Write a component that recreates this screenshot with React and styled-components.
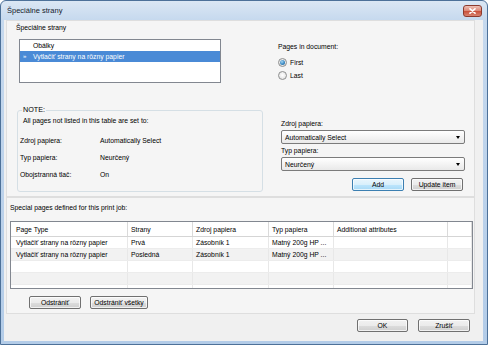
import React from 'react';
import styled, { createGlobalStyle } from 'styled-components';

const GlobalStyle = createGlobalStyle`
  html, body {
    margin: 0;
    padding: 0;
  }
  body {
    font-family: 'Liberation Sans', Arial, sans-serif;
    font-size: 6.8px;
    color: #000;
    background: #ffffff;
  }
  * {
    box-sizing: border-box;
  }
`;

const Window = styled.div`
  width: 488px;
  height: 345px;
  display: flex;
  flex-direction: column;
  padding: 0 4px 3px 3px;
  border: 1px solid #4d7199;
  border-radius: 6px 6px 0 0;
  background: linear-gradient(180deg, #dbe7f4 0px, #c6d9ee 19px, #b3cce8 100%);
`;

const TitleBar = styled.div`
  height: 19px;
  flex: none;
  display: flex;
  align-items: center;
  justify-content: space-between;
  padding-left: 3px;
`;

const Title = styled.span`
  font-size: 7.5px;
  color: #15202c;
`;

const CloseButton = styled.div`
  width: 19px;
  height: 12px;
  margin-right: 1px;
  border-radius: 3px;
  border: 1px solid #8c3a2d;
  background: linear-gradient(180deg, #eec0b5 0%, #dc8877 48%, #c9503a 52%, #d8826f 100%);
  display: flex;
  align-items: center;
  justify-content: center;
`;

const Client = styled.div`
  flex: 1;
  display: flex;
  flex-direction: column;
  background: #f0f0f0;
  padding: 0 8px 0 2px;
`;

const Panel = styled.div`
  flex: none;
  height: ${({ $h }) => $h}px;
  background: #f5f5f5;
  border: 1px solid #dedede;
  display: flex;
  flex-direction: column;
`;

const SectionTitle = styled.div`
  line-height: 10px;
  height: 10px;
  margin: 2px 0 0 9px;
  white-space: nowrap;
`;

const TopRow = styled.div`
  display: flex;
  align-items: flex-start;
  margin-top: 6px;
  padding-left: 12px;
  gap: 57px;
`;

const ListBox = styled.div`
  width: 202px;
  height: 44px;
  background: #fff;
  border: 1px solid #828790;
`;

const ListItem = styled.div`
  height: 11px;
  line-height: 11px;
  display: flex;
  align-items: center;
  padding-left: 3px;
  background: ${({ $selected }) => ($selected ? '#4a8ad6' : 'transparent')};
  color: ${({ $selected }) => ($selected ? '#fff' : '#000')};
`;

const ItemMarker = styled.span`
  width: 10px;
  font-size: 6px;
`;

const PagesGroup = styled.div`
  padding-top: 3px;
`;

const FieldLabel = styled.div`
  line-height: 10px;
  height: 10px;
  white-space: nowrap;
`;

const RadioRow = styled.label`
  display: flex;
  align-items: center;
  gap: 3px;
  height: 13px;
  &:first-of-type {
    margin-top: 4px;
  }
`;

const RadioDot = styled.span`
  width: 9px;
  height: 9px;
  border-radius: 50%;
  border: 1px solid #8e8f8f;
  background: radial-gradient(circle at 50% 45%, #ffffff 0%, #e6e6e6 70%, #d2d2d2 100%);
  display: flex;
  align-items: center;
  justify-content: center;
  &::after {
    content: '';
    display: ${({ $on }) => ($on ? 'block' : 'none')};
    width: 5px;
    height: 5px;
    border-radius: 50%;
    background: radial-gradient(circle at 40% 35%, #a7d6f2 0%, #3a8ac4 55%, #1d5a8d 100%);
  }
`;

const BottomRow = styled.div`
  display: flex;
  align-items: flex-start;
  padding-left: 10px;
`;

const NoteBox = styled.fieldset`
  margin: 22px 0 0 0;
  padding: 0;
  width: 246px;
  height: 87px;
  border: 1px solid #d5dfe5;
  border-radius: 3px;
  min-width: 0;
`;

const NoteLegend = styled.legend`
  margin-left: 4px;
  padding: 0 1px;
  line-height: 10px;
  font-size: 7.2px;
`;

const NoteText = styled.div`
  line-height: 10px;
  margin: 1px 0 0 5px;
  white-space: nowrap;
`;

const NoteGrid = styled.div`
  display: grid;
  grid-template-columns: 80px 1fr;
  grid-auto-rows: 17px;
  align-items: center;
  margin-top: 6px;
  padding-left: 2px;
  white-space: nowrap;
`;

const RightColumn = styled.div`
  width: 184px;
  margin: 36px 0 0 18px;
  display: flex;
  flex-direction: column;
`;

const Select = styled.div`
  height: 14px;
  margin-top: 1px;
  border: 1px solid #7b7b7b;
  border-radius: 2px;
  background: linear-gradient(180deg, #ffffff 0%, #f4f4f4 50%, #e9e9e9 100%);
  display: flex;
  align-items: center;
  justify-content: space-between;
  padding: 0 4px 0 3px;
`;

const Arrow = styled.span`
  width: 0;
  height: 0;
  border-left: 2.5px solid transparent;
  border-right: 2.5px solid transparent;
  border-top: 3px solid #000;
`;

const SpacedLabel = styled(FieldLabel)`
  margin-top: 2px;
`;

const ButtonRow = styled.div`
  display: flex;
  justify-content: ${({ $justify }) => $justify || 'flex-start'};
  gap: ${({ $gap }) => $gap}px;
  margin-top: ${({ $mt }) => $mt}px;
  padding-left: ${({ $pl }) => $pl || 0}px;
  padding-right: ${({ $pr }) => $pr || 0}px;
`;

const Button = styled.button`
  width: ${({ $w }) => $w}px;
  height: 13px;
  padding: 0;
  font-family: inherit;
  font-size: 6.8px;
  color: #000;
  border-radius: 2px;
  border: 1px solid ${({ $primary }) => ($primary ? '#3c7fb1' : '#707070')};
  background: ${({ $primary }) =>
    $primary
      ? 'linear-gradient(180deg, #eaf6fd 0%, #d9f0fc 50%, #bee6fd 51%, #a7d9f5 100%)'
      : 'linear-gradient(180deg, #f2f2f2 0%, #ebebeb 50%, #dddddd 51%, #cfcfcf 100%)'};
  box-shadow: inset 0 0 0 1px rgba(255, 255, 255, 0.7);
`;

const SubTitle = styled.div`
  line-height: 10px;
  margin: 5px 0 0 3px;
  white-space: nowrap;
`;

const Table = styled.div`
  width: 463px;
  height: 68px;
  margin: 8px 0 0 3px;
  border: 1px solid #828790;
  background: #fff;
  overflow: hidden;
`;

const TableRow = styled.div`
  display: grid;
  grid-template-columns: 117px 65px 76px 65px 114px 1fr;
  height: ${({ $header }) => ($header ? 15 : 12)}px;
  background: ${({ $alt }) => ($alt ? '#f2f2f2' : '#fff')};
  border-bottom: 1px solid ${({ $header }) => ($header ? '#d5d5d5' : '#ececec')};
`;

const Cell = styled.div`
  display: flex;
  align-items: center;
  padding-left: 3px;
  border-right: 1px solid ${({ $header }) => ($header ? '#dadada' : '#e8e8e8')};
  white-space: nowrap;
  overflow: hidden;
  &:first-child {
    padding-left: 5px;
  }
`;

const CloseIcon = () => (
  <svg width="7" height="6" viewBox="0 0 7 6">
    <path d="M1 0.8 L6 5.2 M6 0.8 L1 5.2" stroke="#ffffff" strokeWidth="1.6" strokeLinecap="round" />
  </svg>
);

const columns = ['Page Type', 'Strany', 'Zdroj papiera', 'Typ papiera', 'Additional attributes', ''];

const rows = [
  ['Vytlačiť strany na rôzny papier', 'Prvá', 'Zásobník 1', 'Matný 200g HP ...', '', ''],
  ['Vytlačiť strany na rôzny papier', 'Posledná', 'Zásobník 1', 'Matný 200g HP ...', '', ''],
  ['', '', '', '', '', ''],
  ['', '', '', '', '', ''],
  ['', '', '', '', '', ''],
];

const App = () => (
  <>
    <GlobalStyle />
    <Window>
      <TitleBar>
        <Title>Špeciálne strany</Title>
        <CloseButton>
          <CloseIcon />
        </CloseButton>
      </TitleBar>
      <Client>
        <Panel $h={177}>
          <SectionTitle>Špeciálne strany</SectionTitle>
          <TopRow>
            <ListBox>
              <ListItem>
                <ItemMarker />
                Obálky
              </ListItem>
              <ListItem $selected>
                <ItemMarker>»</ItemMarker>
                Vytlačiť strany na rôzny papier
              </ListItem>
            </ListBox>
            <PagesGroup>
              <FieldLabel>Pages in document:</FieldLabel>
              <RadioRow>
                <RadioDot $on />
                First
              </RadioRow>
              <RadioRow>
                <RadioDot />
                Last
              </RadioRow>
            </PagesGroup>
          </TopRow>
          <BottomRow>
            <NoteBox>
              <NoteLegend>NOTE:</NoteLegend>
              <NoteText>All pages not listed in this table are set to:</NoteText>
              <NoteGrid>
                <span>Zdroj papiera:</span>
                <span>Automatically Select</span>
                <span>Typ papiera:</span>
                <span>Neurčený</span>
                <span>Obojstranná tlač:</span>
                <span>On</span>
              </NoteGrid>
            </NoteBox>
            <RightColumn>
              <FieldLabel>Zdroj papiera:</FieldLabel>
              <Select>
                Automatically Select
                <Arrow />
              </Select>
              <SpacedLabel>Typ papiera:</SpacedLabel>
              <Select>
                Neurčený
                <Arrow />
              </Select>
              <ButtonRow $justify="flex-end" $gap={7} $mt={7} $pr={2}>
                <Button $w={52} $primary>Add</Button>
                <Button $w={52}>Update item</Button>
              </ButtonRow>
            </RightColumn>
          </BottomRow>
        </Panel>
        <Panel $h={117}>
          <SubTitle>Special pages defined for this print job:</SubTitle>
          <Table>
            <TableRow $header>
              {columns.map((c, i) => (
                <Cell key={i} $header>{c}</Cell>
              ))}
            </TableRow>
            {rows.map((r, ri) => (
              <TableRow key={ri} $alt={ri % 2 === 1}>
                {r.map((c, ci) => (
                  <Cell key={ci}>{c}</Cell>
                ))}
              </TableRow>
            ))}
          </Table>
          <ButtonRow $gap={9} $mt={7} $pl={22}>
            <Button $w={52}>Odstrániť</Button>
            <Button $w={58}>Odstrániť všetky</Button>
          </ButtonRow>
        </Panel>
        <ButtonRow $justify="flex-end" $gap={10} $mt={5} $pr={5}>
          <Button $w={51}>OK</Button>
          <Button $w={52}>Zrušiť</Button>
        </ButtonRow>
      </Client>
    </Window>
  </>
);

export default App;
